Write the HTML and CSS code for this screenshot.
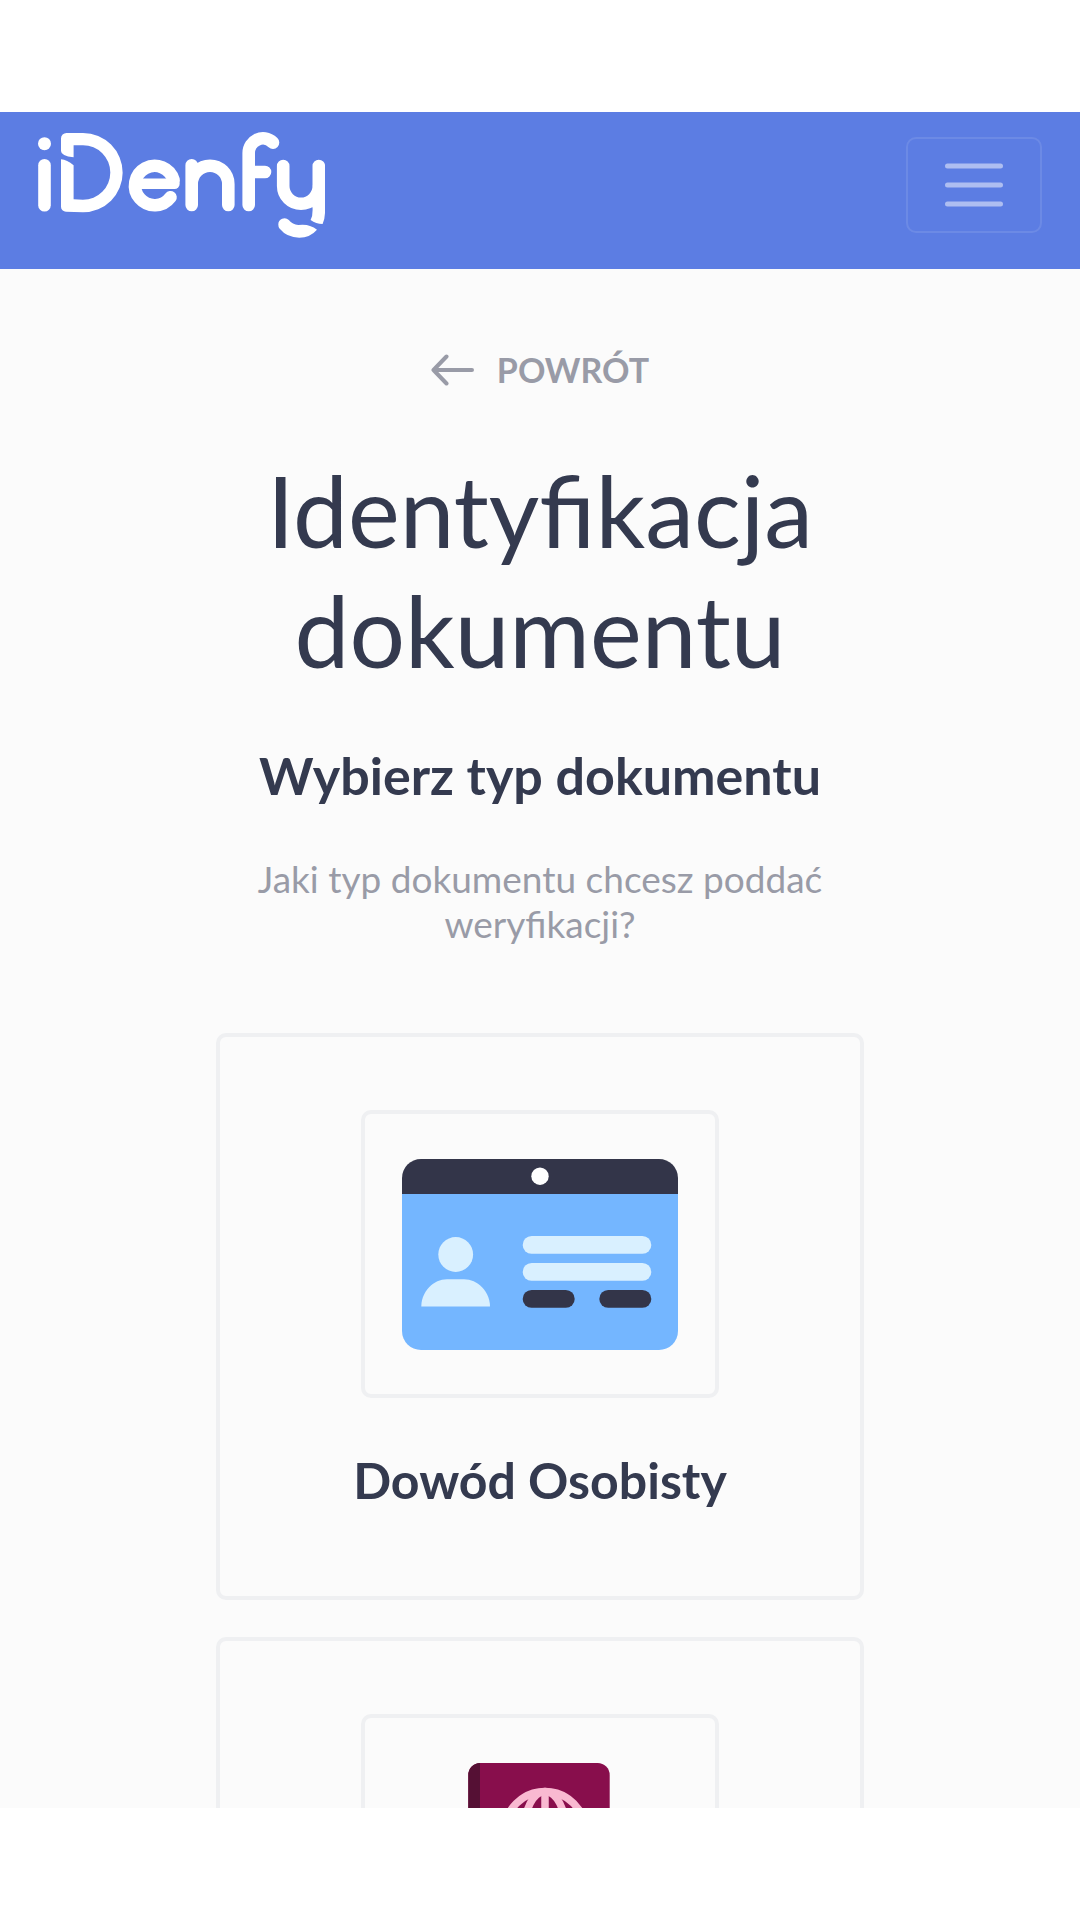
FILE: index.html
```html
<!DOCTYPE html>
<html lang="pl">
<head>
  <meta charset="utf-8">
  <meta name="viewport" content="width=device-width, initial-scale=1">
  <title>iDenfy – Identyfikacja dokumentu</title>
  <link rel="stylesheet" href="styles.css">
</head>
<body>
  <header class="navbar">
    <a class="navbar-brand" href="#" aria-label="iDenfy">
      <svg class="logo" viewBox="0 0 287 106" aria-hidden="true">
        <g fill="currentColor">
          <circle cx="6.5" cy="11.7" r="6.5"/>
          <path d="M23 6.500a5.500 5.500 0 0 1 5.500-5.500H45a39.650 39.650 0 0 1 0 79.300L28 79.700a5 5 0 0 1-5-5V27.300Q29 27.600 35.600 33.300V67.300L45 67.800a27.300 27.300 0 0 0 0-54.600H35.600V25.300Q23 24 23 19Z"/>
          <path d="M274.600 74H287V81Q286.800 87 284.600 92Q278 92 272.600 88Q274.700 84 274.600 78Z"/>
          <path d="M240.300 92.500a6.200 6.200 0 0 1 10.500-4.500Q254.500 92.500 260.300 93Q268 92.300 272 94Q276 95 279 97.700Q272 105.700 261.300 105.700Q249 105.700 241.500 96.500Q240.300 95 240.300 92.500Z"/>
        </g>
        <g fill="none" stroke="currentColor" stroke-width="12.6" stroke-linecap="round">
          <path d="M6.500 33.300V73.300"/>
          <path d="M135.600 48A19.700 19.700 0 1 0 132.500 65.300"/>
          <path d="M100 51.800H136.500" stroke-width="10.400"/>
          <path d="M153.700 33.300V73M153.700 52A18.300 18.300 0 0 1 190.300 52V73"/>
          <path d="M210.700 73V21C210.700 9 225 1 235 10.600M210.700 40H227"/>
          <path d="M245.200 34V54A17.800 17.800 0 0 0 280.800 54V34M280.700 54V74"/>
        </g>
      </svg>
    </a>
    <button class="navbar-toggler" type="button" aria-label="Menu">
      <svg class="toggler-icon" viewBox="0 0 58 44" aria-hidden="true">
        <path d="M2.500 3H55.500M2.500 22H55.500M2.500 41H55.500" fill="none" stroke="currentColor" stroke-width="5" stroke-linecap="round"/>
      </svg>
    </button>
  </header>

  <main class="page">
    <div class="content">
      <button class="back" type="button">
        <svg class="back-icon" viewBox="0 0 43 32" aria-hidden="true">
          <path d="M41 16H2.500M15.500 2.500L2.500 16L15.500 29.500" fill="none" stroke="currentColor" stroke-width="4" stroke-linecap="round" stroke-linejoin="round"/>
        </svg>
        <span>POWRÓT</span>
      </button>
      <h1 class="title">Identyfikacja dokumentu</h1>
      <h2 class="subtitle">Wybierz typ dokumentu</h2>
      <p class="lead">Jaki typ dokumentu chcesz poddać weryfikacji?</p>

      <div class="options">
        <button class="option" type="button">
          <span class="option-image">
            <svg class="option-icon" viewBox="0 0 276 191" aria-hidden="true">
              <path d="M0 34H276V172a19 19 0 0 1-19 19H19a19 19 0 0 1-19-19Z" fill="#74b6ff"/>
              <path d="M0 35V19A19 19 0 0 1 19 0H257a19 19 0 0 1 19 19V35Z" fill="#333549"/>
              <circle cx="138" cy="17.200" r="8.700" fill="#fff"/>
              <g fill="#d9f0ff">
                <circle cx="53.700" cy="95.500" r="17.400"/>
                <path d="M19.300 147.500C19.300 133 31 120.300 45 120.300H62C76 120.300 88 133 88 147.500Z"/>
                <rect x="120.700" y="77" width="128.600" height="17.800" rx="8.900"/>
                <rect x="120.700" y="104" width="128.600" height="17.800" rx="8.900"/>
              </g>
              <g fill="#333549">
                <rect x="120.700" y="131" width="52" height="17.800" rx="8.900"/>
                <rect x="197.300" y="131" width="52" height="17.800" rx="8.900"/>
              </g>
            </svg>
          </span>
          <span class="option-label">Dowód Osobisty</span>
        </button>

        <button class="option" type="button" aria-label="Paszport">
          <span class="option-image">
            <svg class="option-icon" viewBox="0 0 276 191" aria-hidden="true">
              <rect x="66.300" y="0" width="141.400" height="191" rx="12" fill="#880e4c"/>
              <path d="M78 0V191A12 12 0 0 1 66.300 179V12A12 12 0 0 1 78 0Z" fill="#551034"/>
              <g fill="none" stroke="#f9b9d1" stroke-width="7.500">
                <circle cx="143" cy="69" r="40.500"/>
                <ellipse cx="143" cy="69" rx="21" ry="40.500"/>
                <path d="M143 28.500V109.500M102.500 69H183.500"/>
              </g>
              <rect x="103" y="135" width="80" height="14" rx="7" fill="#f9b9d1"/>
            </svg>
          </span>
        </button>
      </div>
    </div>
  </main>
</body>
</html>
```
FILE: styles.css
```css
* {
  box-sizing: border-box;
}

body {
  display: flex;
  flex-direction: column;
  height: 100vh;
  margin: 0;
  padding: 112px 0;
  background: #fff;
  color: #343a4f;
  font-family: Lato, "Open Sans", sans-serif;
}

button {
  padding: 0;
  border: 0;
  background: none;
  color: inherit;
  font: inherit;
  cursor: pointer;
}

svg {
  display: block;
}

.navbar {
  display: flex;
  flex: none;
  align-items: center;
  justify-content: space-between;
  padding: 20px 38px 31px;
  background: #5c7de3;
  color: #fff;
}

.logo {
  width: 287px;
  height: 106px;
}

.navbar-brand {
  color: inherit;
}

.navbar-toggler {
  padding: 24px 37px;
  border: 2px solid rgba(255, 255, 255, 0.1);
  border-radius: 10px;
  color: rgba(255, 255, 255, 0.5);
}

.toggler-icon {
  width: 58px;
  height: 44px;
}

.page {
  flex: 1;
  min-height: 0;
  overflow-y: auto;
  scrollbar-width: none;
  background: #fbfbfb;
}

.content {
  display: flex;
  flex-direction: column;
  align-items: center;
  width: 60%;
  margin: 0 auto;
  padding: 79px 0;
  text-align: center;
}

.back {
  display: flex;
  align-items: center;
  gap: 23px;
  color: #999ba7;
  font-size: 34px;
  font-weight: 700;
  line-height: 44px;
}

.back-icon {
  width: 43px;
  height: 32px;
}

.title {
  margin: 58px 0 0;
  font-size: 98px;
  font-weight: 400;
  line-height: 120px;
}

.subtitle {
  margin: 53px 0 0;
  font-size: 52px;
  font-weight: 700;
  line-height: 64px;
}

.lead {
  margin: 49px 0 0;
  color: #999ba7;
  font-size: 37px;
  line-height: 45px;
}

.options {
  display: flex;
  flex-direction: column;
  gap: 37px;
  width: 100%;
  margin-top: 87px;
}

.option {
  display: flex;
  flex-direction: column;
  align-items: center;
  gap: 50px;
  padding: 73px 24px 84px;
  border: 4px solid #eff0f2;
  border-radius: 10px;
}

.option-image {
  padding: 45px 37px 44px;
  border: 4px solid #eff0f2;
  border-radius: 10px;
}

.option-icon {
  width: 276px;
  height: 191px;
}

.option-label {
  font-size: 50px;
  font-weight: 700;
  line-height: 64px;
}
```
